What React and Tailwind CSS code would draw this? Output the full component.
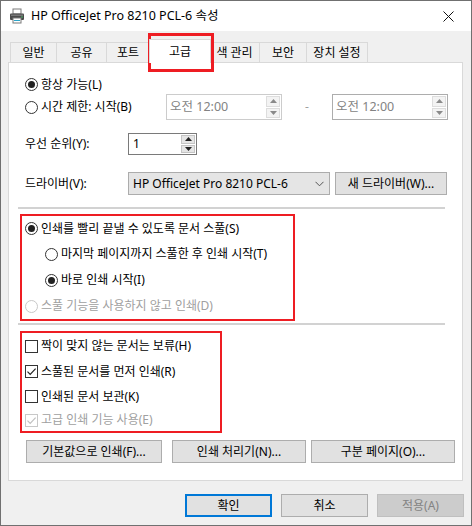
import React from "react";

function Radio({ checked, disabled }) {
  return (
    <span
      className={`shrink-0 w-[13px] h-[13px] rounded-full border bg-white flex items-center justify-center ${
        disabled ? "border-[#c8c8c8]" : "border-[#333333]"
      }`}
    >
      {checked && <span className="w-[7px] h-[7px] rounded-full bg-[#222222]" />}
    </span>
  );
}

function Check({ checked, disabled }) {
  return (
    <span
      className={`shrink-0 w-[13px] h-[13px] border bg-white flex items-center justify-center ${
        disabled ? "border-[#c8c8c8]" : "border-[#333333]"
      }`}
    >
      {checked && (
        <svg width="11" height="11" viewBox="0 0 11 11">
          <path
            d="M1.5 5.6 L4.2 8.3 L9.6 2.6"
            fill="none"
            stroke={disabled ? "#c0c0c0" : "#222"}
            strokeWidth="1.2"
          />
        </svg>
      )}
    </span>
  );
}

function Spin({ light }) {
  const arrow = light ? "#8a8a8a" : "#222";
  const box = light ? "bg-[#f3f3f3] border-[#dddddd]" : "bg-[#e5e5e5] border-[#c4c4c4]";
  return (
    <div className="w-[16px] h-full flex flex-col gap-[1px] p-[1px]">
      <div className={`flex-1 border ${box} flex items-center justify-center`}>
        <svg width="7" height="4" viewBox="0 0 7 4">
          <path d="M0 4 L3.5 0 L7 4Z" fill={arrow} />
        </svg>
      </div>
      <div className={`flex-1 border ${box} flex items-center justify-center`}>
        <svg width="7" height="4" viewBox="0 0 7 4">
          <path d="M0 0 L3.5 4 L7 0Z" fill={arrow} />
        </svg>
      </div>
    </div>
  );
}

function Btn({ children, className }) {
  return (
    <div
      className={`h-[23px] bg-[#e1e1e1] border border-[#adadad] flex items-center justify-center ${className}`}
    >
      {children}
    </div>
  );
}

export default function App() {
  return (
    <div className="relative w-[472px] h-[526px] overflow-hidden bg-[#f0f0f0] border border-[#707070] flex flex-col font-['Noto_Sans','Noto_Sans_CJK_KR',sans-serif] text-[12px] leading-none text-black">
      {/* title bar */}
      <div className="h-[30px] shrink-0 bg-white flex items-center">
        <svg className="ml-[8px]" width="16" height="16" viewBox="0 0 16 16">
          <rect x="4" y="1" width="8" height="5" fill="#fff" stroke="#7a7a7a" />
          <rect x="1" y="5.5" width="14" height="6.5" rx="1" fill="#4a4a4a" />
          <rect x="2" y="6.5" width="12" height="1.5" fill="#777" />
          <rect x="4" y="10" width="8" height="5" fill="#fff" stroke="#7a7a7a" />
          <rect x="5" y="12" width="6" height="1" fill="#2aa4c9" />
          <circle cx="13" cy="9" r="0.8" fill="#49c26b" />
        </svg>
        <span className="ml-[6px] text-[12.5px]">HP OfficeJet Pro 8210 PCL-6 속성</span>
        <div className="ml-auto w-[46px] h-full flex items-center justify-center">
          <svg width="11" height="11" viewBox="0 0 11 11">
            <path d="M0.5 0.5 L10.5 10.5 M10.5 0.5 L0.5 10.5" stroke="#111" strokeWidth="1" />
          </svg>
        </div>
      </div>

      {/* tabs */}
      <div className="mt-[8px] ml-[9px] h-[23px] flex items-end shrink-0">
        <div className="w-[47px] h-[20px] border border-b-0 border-[#d9d9d9] flex items-center justify-center">일반</div>
        <div className="-ml-px w-[51px] h-[20px] border border-b-0 border-[#d9d9d9] flex items-center justify-center">공유</div>
        <div className="-ml-px w-[44px] h-[20px] border border-b-0 border-[#d9d9d9] flex items-center justify-center">포트</div>
        <div className="relative z-10 -ml-[1px] -mb-px w-[62px] h-[24px] bg-white border border-b-0 border-[#d9d9d9] flex items-center justify-center">고급</div>
        <div className="-ml-px w-[50px] h-[20px] border border-b-0 border-l-0 border-[#d9d9d9] flex items-center justify-center">색 관리</div>
        <div className="-ml-px w-[48px] h-[20px] border border-b-0 border-[#d9d9d9] flex items-center justify-center">보안</div>
        <div className="-ml-px w-[62px] h-[20px] border border-b-0 border-[#d9d9d9] flex items-center justify-center">장치 설정</div>
      </div>

      {/* panel */}
      <div className="ml-[7px] w-[455px] h-[419px] shrink-0 bg-white border border-[#d9d9d9] flex flex-col pl-[16px] pt-[12px]">
        <div className="h-[19px] flex items-center gap-[3px]">
          <Radio checked />
          <span>항상 가능(L)</span>
        </div>
        <div className="h-[26px] flex items-center">
          <div className="w-[141px] flex items-center gap-[3px]">
            <Radio />
            <span>시간 제한: 시작(B)</span>
          </div>
          <div className="w-[116px] h-[26px] border border-[#cccccc] flex items-center">
            <span className="flex-1 pl-[3px] text-[#838383] text-[12.5px]">오전 12:00</span>
            <Spin light />
          </div>
          <div className="w-[50px] text-center text-[#a0a0a0]">-</div>
          <div className="w-[116px] h-[26px] border border-[#adadad] flex items-center">
            <span className="flex-1 pl-[3px] text-[#838383] text-[12.5px]">오전 12:00</span>
            <Spin light />
          </div>
        </div>

        <div className="mt-[13px] h-[22px] flex items-center">
          <span className="w-[103px]">우선 순위(Y):</span>
          <div className="w-[69px] h-[22px] border border-[#7a7a7a] flex items-center">
            <span className="flex-1 pl-[4px]">1</span>
            <Spin />
          </div>
        </div>

        <div className="mt-[17px] h-[23px] flex items-center">
          <span className="w-[103px]">드라이버(V):</span>
          <div className="w-[202px] h-[23px] bg-[#e5e5e5] border border-[#acacac] flex items-center pl-[4px] pr-[5px]">
            <span className="flex-1">HP OfficeJet Pro 8210 PCL-6</span>
            <svg width="9" height="6" viewBox="0 0 9 6">
              <path d="M0.5 0.8 L4.5 4.8 L8.5 0.8" fill="none" stroke="#555" strokeWidth="1" />
            </svg>
          </div>
          <Btn className="ml-[5px] w-[112px]">새 드라이버(W)...</Btn>
        </div>

        <div className="mt-[12px] -ml-[7px] w-[427px] h-[2px] bg-[#d2d2d2]" />

        {/* spool group */}
        <div className="mt-[5px] -ml-[5px] w-[275px] border-2 border-[#ee1d23] pl-[3px] flex flex-col">
          <div className="h-[25px] flex items-center gap-[3px]">
            <Radio checked />
            <span>인쇄를 빨리 끝낼 수 있도록 문서 스풀(S)</span>
          </div>
          <div className="h-[26px] flex items-center gap-[3px] pl-[20px]">
            <Radio />
            <span>마지막 페이지까지 스풀한 후 인쇄 시작(T)</span>
          </div>
          <div className="h-[26px] flex items-center gap-[3px] pl-[20px]">
            <Radio checked />
            <span>바로 인쇄 시작(I)</span>
          </div>
          <div className="h-[26px] flex items-center gap-[3px] text-[#a0a0a0]">
            <Radio disabled />
            <span>스풀 기능을 사용하지 않고 인쇄(D)</span>
          </div>
        </div>

        <div className="mt-[2px] -ml-[7px] w-[427px] h-[2px] bg-[#d2d2d2]" />

        {/* checkbox group */}
        <div className="mt-[6px] -ml-[5px] w-[202px] border-2 border-[#ee1d23] pl-[3px] flex flex-col">
          <div className="h-[26px] flex items-center gap-[3px]">
            <Check />
            <span>짝이 맞지 않는 문서는 보류(H)</span>
          </div>
          <div className="h-[25px] flex items-center gap-[3px]">
            <Check checked />
            <span>스풀된 문서를 먼저 인쇄(R)</span>
          </div>
          <div className="h-[25px] flex items-center gap-[3px]">
            <Check />
            <span>인쇄된 문서 보관(K)</span>
          </div>
          <div className="h-[22px] flex items-center gap-[3px] text-[#a0a0a0]">
            <Check checked disabled />
            <span>고급 인쇄 기능 사용(E)</span>
          </div>
        </div>

        <div className="mt-[7px] flex items-center">
          <Btn className="ml-[1px] w-[136px]">기본값으로 인쇄(F)...</Btn>
          <Btn className="ml-[10px] w-[134px]">인쇄 처리기(N)...</Btn>
          <Btn className="ml-[5px] w-[144px]">구분 페이지(O)...</Btn>
        </div>
      </div>

      {/* bottom buttons */}
      <div className="mt-[13px] flex justify-end gap-[9px] pr-[7px]">
        <Btn className="w-[87px] !border-[#0078d7] ring-1 ring-inset ring-[#0078d7]">확인</Btn>
        <Btn className="w-[87px]">취소</Btn>
        <div className="w-[87px] h-[23px] bg-[#cccccc] border border-[#bfbfbf] text-[#838383] flex items-center justify-center">
          적용(A)
        </div>
      </div>

      {/* annotation over selected tab */}
      <div className="absolute left-[147px] top-[32px] w-[66px] h-[39px] border-[3px] border-[#ee1d23] pointer-events-none" />
    </div>
  );
}
